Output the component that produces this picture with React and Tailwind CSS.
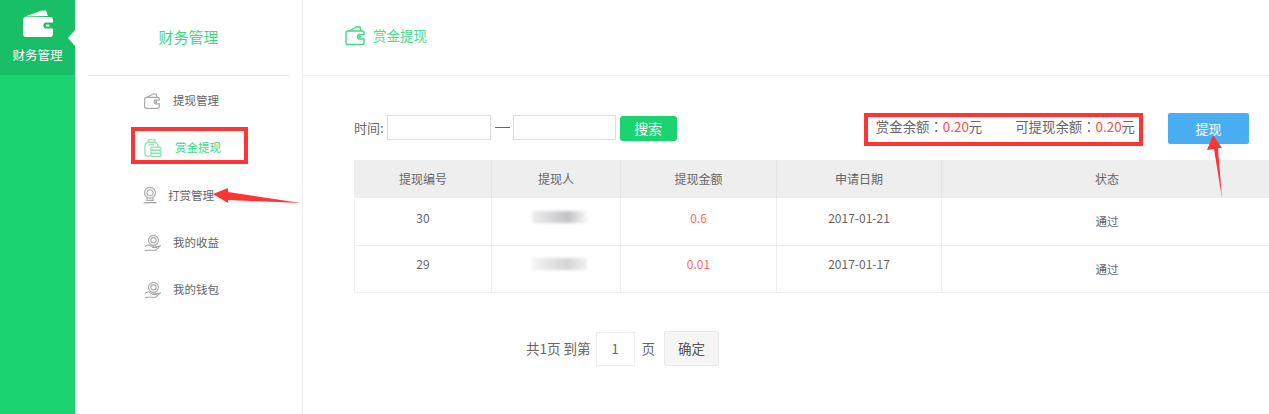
const menu = [
  { label: '提现管理', icon: 'wallet', pl: 'pl-[68px]', gap: 'gap-[12px]' },
  { label: '赏金提现', icon: 'coins', pl: 'pl-[69px]', gap: 'gap-[13px]', active: true },
  { label: '打赏管理', icon: 'cam', pl: 'pl-[66px]', gap: 'gap-[9px]' },
  { label: '我的收益', icon: 'hand', pl: 'pl-[69px]', gap: 'gap-[11px]' },
  { label: '我的钱包', icon: 'hand', pl: 'pl-[69px]', gap: 'gap-[11px]' },
];

const rows = [
  { id: '30', money: '0.6', date: '2017-01-21', pt: 'pt-[11px]', nameTop: 'pt-[13px]', blur: 'from-[#efeeef] via-[#c2c1c5] to-[#f8f8f8]' },
  { id: '29', money: '0.01', date: '2017-01-17', pt: 'pt-[9px]', nameTop: 'pt-[12px]', blur: 'from-[#f4f4f4] via-[#d4d4d6] to-[#f2f2f2]' },
];

function WalletIcon({ className }) {
  return (
    <svg viewBox="0 0 22 20" fill="none" stroke="currentColor" strokeWidth="1.4" className={className}>
      <path d="M2 7.5 C2 6 3 5.5 4 5.5 L18 5.5 C19.5 5.5 20 6.5 20 7.5 L20 9 L15.5 9 C13 9 13 13.5 15.5 13.5 L20 13.5 L20 17 C20 18.3 19 19 18 19 L4 19 C2.8 19 2 18.2 2 17 Z" />
      <path d="M5 5.5 L13 1.2 L16 1.5 L17 5.5" />
      <circle cx="16" cy="11.2" r="0.7" />
    </svg>
  );
}

function CoinsIcon({ className }) {
  return (
    <svg viewBox="0 0 20 20" fill="none" stroke="currentColor" strokeWidth="1.3" className={className}>
      <path d="M5 3.5 C2 4 1 6 1 8.5 L1 16 C1 18 2 19 4 19 L7 19" />
      <path d="M4.5 0.8 L12.5 0.8 L11.5 3.5 L5.5 3.5 Z" />
      <path d="M11.5 3.5 C14 4 15.5 5.5 15.5 8.5" />
      <path d="M5 6.5 L11 6.5" />
      <rect x="7.5" y="9" width="11.5" height="3.4" rx="1.7" />
      <rect x="7.5" y="12.5" width="11.5" height="3.4" rx="1.7" />
      <rect x="7.5" y="16" width="11.5" height="3.4" rx="1.7" />
    </svg>
  );
}

function CamIcon({ className }) {
  return (
    <svg viewBox="0 0 18 20" fill="none" stroke="currentColor" strokeWidth="1.2" className={className}>
      <circle cx="9" cy="7.5" r="6" />
      <circle cx="9" cy="7.5" r="3.4" />
      <path d="M6 13 L5.5 16 L12.5 16 L12 13" />
      <path d="M2 18.5 L16 18.5" strokeWidth="1.6" />
    </svg>
  );
}

function HandIcon({ className }) {
  return (
    <svg viewBox="0 0 20 19" fill="none" stroke="currentColor" strokeWidth="1.2" className={className}>
      <circle cx="10.5" cy="6.5" r="5.5" />
      <circle cx="10.5" cy="6.5" r="3" />
      <path d="M1 13 L5 11.5 L8 13 L13 13 L14 14.5 L9 14.5" />
      <path d="M13.5 14 L18.5 12.5 L13 17.5 L5 17.5 L1 18" />
    </svg>
  );
}

function MenuIcon({ type, className }) {
  if (type === 'wallet') return <WalletIcon className={className} />;
  if (type === 'coins') return <CoinsIcon className={className} />;
  if (type === 'cam') return <CamIcon className={className} />;
  return <HandIcon className={className} />;
}

export default function App() {
  return (
    <div className="relative flex h-[414px] w-[1269px] overflow-hidden bg-white text-[12px] text-[#666] font-['Noto_Sans_CJK_SC','Liberation_Sans',sans-serif]">
      {/* green rail */}
      <div className="w-[75px] shrink-0 bg-[#1cd372]">
        <div className="relative flex h-[75px] flex-col items-center bg-[#19bf67] pt-[10px] text-white">
          <svg viewBox="0 0 30 27" className="h-[27px] w-[30px]" fill="currentColor">
            <path d="M2 6.5 L19 0.5 L23 0.5 L25 6 Z" />
            <path d="M3 7 L27 7 C29 7 30 8 30 10 L30 12.5 L23 12.5 C19.5 12.5 19.5 18.5 23 18.5 L30 18.5 L30 24 C30 26 29 27 27 27 L3 27 C1 27 0 26 0 24 L0 10 C0 8 1 7 3 7 Z" />
            <rect x="23" y="14.5" width="3.5" height="2.2" rx="1" />
          </svg>
          <span className="mt-[9px] text-[12.5px] leading-[18px]">财务管理</span>
          <span className="absolute right-0 top-[30px] h-0 w-0 border-y-[8px] border-r-[7px] border-y-transparent border-r-white" />
        </div>
      </div>

      {/* second column */}
      <div className="w-[228px] shrink-0 border-r border-[#eee]">
        <div className="mx-[13px] flex h-[76px] items-center justify-center border-b border-[#e8e8e8] text-[15px] text-[#3fd885]">
          财务管理
        </div>
        <ul className="pt-[1px]">
          {menu.map((item) => (
            <li
              key={item.label}
              className={`flex h-[47.3px] items-center text-[11.5px] ${item.pl} ${item.gap} ${item.active ? 'text-[#3fd885]' : 'text-[#666]'}`}
            >
              <MenuIcon type={item.icon} className={`h-[18px] w-[18px] shrink-0 ${item.active ? 'text-[#7fe3ab]' : 'text-[#a8a8a8]'}`} />
              <span>{item.label}</span>
            </li>
          ))}
        </ul>
      </div>

      {/* main */}
      <div className="min-w-0 flex-1">
        <div className="flex h-[76px] items-center gap-[7px] border-b border-[#eee] pb-[4px] pl-[41px] text-[13.5px] text-[#4fdc90]">
          <WalletIcon className="h-[21px] w-[22px] text-[#3fd885]" />
          <span>赏金提现</span>
        </div>

        <div className="flex h-[84px] items-start pl-[51px] pr-[20px] pt-[38px]">
          <div className="flex items-center">
            <span className="mr-[3px] text-[13px] text-[#666]">时间:</span>
            <input className="h-[25px] w-[104px] border border-[#ddd] bg-white" />
            <span className="ml-[4px] mr-[3px] h-px w-[15px] bg-[#666]" />
            <input className="h-[25px] w-[103px] border border-[#ddd] bg-white" />
            <button className="ml-[4px] mt-[2px] h-[25px] w-[57px] rounded-[3px] bg-[#1cd372] text-[14px] text-white">搜索</button>
          </div>
          <div className="ml-auto mr-[33px] flex h-[25px] items-center gap-[33px] text-[13.4px] text-[#666]">
            <span>赏金余额<span className="font-['Noto_Sans_CJK_TC']">：</span><span className="text-[#ff4a4a]">0.20</span>元</span>
            <span>可提现余额<span className="font-['Noto_Sans_CJK_TC']">：</span><span className="text-[#ff4a4a]">0.20</span>元</span>
          </div>
          <button className="-mt-[1px] h-[31px] w-[81px] shrink-0 rounded-[2px] bg-[#4aaff2] text-[13px] text-white">提现</button>
        </div>

        <div className="ml-[51px] w-[960px] border-x border-b border-[#eee]">
          <div className="flex h-[38px] items-center bg-[#eeeeee] text-[12px] text-[#666]">
            <div className="flex h-full w-[137px] items-center justify-center border-r border-[#e4e4e4]">提现编号</div>
            <div className="flex h-full w-[129px] items-center justify-center border-r border-[#e4e4e4]">提现人</div>
            <div className="flex h-full w-[156px] items-center justify-center border-r border-[#e4e4e4]">提现金额</div>
            <div className="flex h-full w-[165px] items-center justify-center border-r border-[#e4e4e4]">申请日期</div>
            <div className="flex h-full w-[350px] items-center justify-center pr-[20px]">状态</div>
          </div>
          {rows.map((r, i) => (
            <div key={r.id} className={`flex h-[47px] text-[12px] text-[#666] ${i ? 'border-t border-[#eee]' : ''}`}>
              <div className={`flex h-full w-[137px] justify-center border-r border-[#eee] ${r.pt}`}>{r.id}</div>
              <div className={`flex h-full w-[129px] justify-center border-r border-[#eee] pl-[6px] ${r.nameTop}`}>
                <div className={`h-[12px] w-[55px] bg-gradient-to-r via-65% ${r.blur} blur-[1.5px]`} />
              </div>
              <div className={`flex h-full w-[156px] justify-center border-r border-[#eee] text-[#ff6b6b] ${r.pt}`}>{r.money}</div>
              <div className={`flex h-full w-[165px] justify-center border-r border-[#eee] ${r.pt}`}>{r.date}</div>
              <div className="flex h-full w-[350px] justify-center pr-[20px] pt-[15px] text-[11.5px]">通过</div>
            </div>
          ))}
        </div>

        <div className="mt-[38px] flex items-center pl-[223px] text-[13.5px] text-[#666]">
          <span>共1页 到第</span>
          <div className="ml-[5px] flex h-[34px] w-[39px] items-center justify-center border border-[#eee] text-[13px]">1</div>
          <span className="ml-[7px]">页</span>
          <button className="ml-[9px] h-[35px] w-[55px] rounded-[2px] border border-[#e8e8e8] bg-[#f5f5f5] text-[#555]">确定</button>
        </div>
      </div>

      {/* red annotations drawn on top of the screenshot */}
      <div className="absolute left-[131px] top-[127px] h-[37px] w-[117px] border-[4px] border-[#fd3535]" />
      <div className="absolute left-[864px] top-[113px] h-[33px] w-[279px] border-[4px] border-[#fd3535]" />
      <svg className="pointer-events-none absolute left-0 top-0 h-[414px] w-[1269px]" viewBox="0 0 1269 414">
        <polygon fill="#fd3535" points="213,194 228,188 228,192 301,203 228,200 228,203" />
        <polygon fill="#fd3535" points="1213,135 1222,148 1218,148 1222,198 1214,149 1207,150" />
      </svg>
    </div>
  );
}
